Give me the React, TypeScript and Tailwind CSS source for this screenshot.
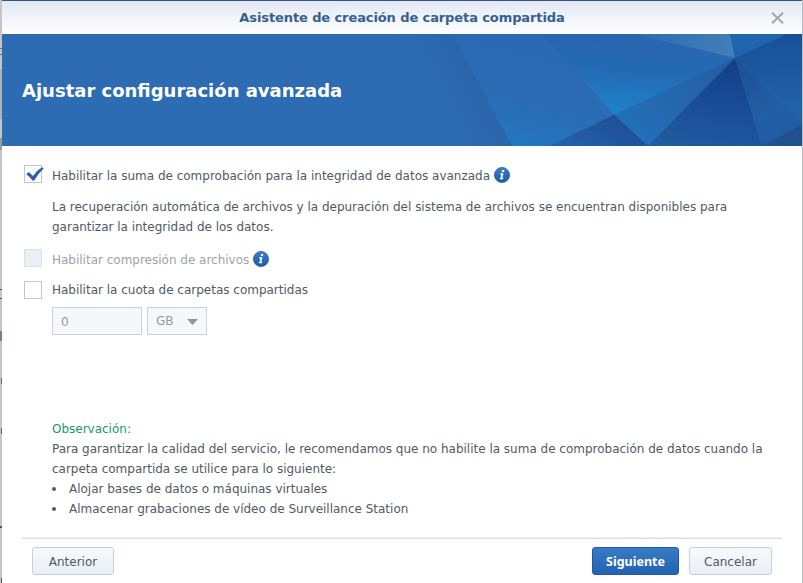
import React from "react";

function InfoIcon() {
  return (
    <svg width="16" height="16" viewBox="0 0 16 16" className="mt-px shrink-0">
      <defs>
        <linearGradient id="info" x1="0" y1="0" x2="0" y2="1">
          <stop offset="0" stopColor="#3b80cb" />
          <stop offset="1" stopColor="#1c58a8" />
        </linearGradient>
      </defs>
      <circle cx="8" cy="8" r="7.6" fill="url(#info)" stroke="#1f559c" strokeWidth=".7" />
      <path d="M8.2 3h2.2l-.5 2H7.7zM6.3 6.2h3.2L8.4 11h1l-.3 1.3H5.7L6 11h.5l.8-3.5H6z" fill="#fff" />
    </svg>
  );
}

function Banner({ children }: { children: React.ReactNode }) {
  return (
    <div className="relative flex h-[112px] w-[800px] shrink-0 items-center bg-[#2d6cb3]">
      <svg className="absolute inset-0" width="800" height="112" viewBox="0 0 800 112">
        <defs>
          <linearGradient id="shade" gradientUnits="userSpaceOnUse" x1="428" y1="72" x2="480" y2="44">
            <stop offset="0" stopColor="#2d6cb3" />
            <stop offset="1" stopColor="#2b65ac" />
          </linearGradient>
          <linearGradient id="left" gradientUnits="userSpaceOnUse" x1="550" y1="0" x2="520" y2="112">
            <stop offset="0" stopColor="#2a69b1" />
            <stop offset=".6" stopColor="#2b6cb4" />
            <stop offset="1" stopColor="#2276be" />
          </linearGradient>
          <linearGradient id="bright" gradientUnits="userSpaceOnUse" x1="620" y1="0" x2="615" y2="80">
            <stop offset="0" stopColor="#2966ae" />
            <stop offset=".45" stopColor="#246ab3" />
            <stop offset="1" stopColor="#1c83cc" />
          </linearGradient>
          <linearGradient id="pale" gradientUnits="userSpaceOnUse" x1="650" y1="0" x2="730" y2="15">
            <stop offset="0" stopColor="#2f70b2" />
            <stop offset="1" stopColor="#427eb7" />
          </linearGradient>
          <linearGradient id="mid" gradientUnits="userSpaceOnUse" x1="725" y1="28" x2="640" y2="112">
            <stop offset="0" stopColor="#245c9f" />
            <stop offset=".55" stopColor="#2567ad" />
            <stop offset="1" stopColor="#2071ba" />
          </linearGradient>
          <linearGradient id="base" gradientUnits="userSpaceOnUse" x1="612" y1="80" x2="590" y2="125">
            <stop offset="0" stopColor="#1e4e97" />
            <stop offset="1" stopColor="#2461ab" />
          </linearGradient>
          <linearGradient id="dark" gradientUnits="userSpaceOnUse" x1="730" y1="30" x2="712" y2="125">
            <stop offset="0" stopColor="#134089" />
            <stop offset=".5" stopColor="#1a4e96" />
            <stop offset="1" stopColor="#235ca1" />
          </linearGradient>
          <linearGradient id="wedge" gradientUnits="userSpaceOnUse" x1="735" y1="30" x2="780" y2="110">
            <stop offset="0" stopColor="#1e4f94" />
            <stop offset=".6" stopColor="#225ea3" />
            <stop offset="1" stopColor="#1f5da2" />
          </linearGradient>
          <linearGradient id="right" gradientUnits="userSpaceOnUse" x1="770" y1="5" x2="780" y2="75">
            <stop offset="0" stopColor="#185197" />
            <stop offset="1" stopColor="#2361a6" />
          </linearGradient>
        </defs>
        <polygon points="380,0 451,0 510,112 380,112" fill="url(#shade)" />
        <polygon points="451,0 540,0 612,80.7 548,112 510,112" fill="url(#left)" />
        <polygon points="540,0 635,0 733,24 612,80.7" fill="url(#bright)" />
        <polygon points="633,0 728,0 733,24" fill="url(#pale)" />
        <polygon points="728,0 785,0 733,24" fill="#1e65ae" />
        <polygon points="785,0 800,0 800,88 733,24" fill="url(#right)" />
        <polygon points="733,24 612,80.7 646,112" fill="url(#mid)" />
        <polygon points="612,80.7 548,112 646,112" fill="url(#base)" />
        <polygon points="733,24 646,112 760,112" fill="url(#dark)" />
        <polygon points="733,24 800,88 800,90 760,112" fill="url(#wedge)" />
        <polygon points="800,90 800,112 760,112" fill="#1f528f" />
      </svg>
      {children}
    </div>
  );
}

function Box({ checked, disabled }: { checked?: boolean; disabled?: boolean }) {
  return (
    <span
      className={
        "mr-[10px] block h-[18px] w-[18px] shrink-0 border " +
        (disabled ? "border-[#d9e2ea] bg-[#ebf0f5]" : "border-[#bdc8d0] bg-white")
      }
    >
      {checked && (
        <svg width="20" height="18" viewBox="0 0 20 18" className="-mt-px max-w-none overflow-visible">
          <path d="M1.2 9.2 3.8 7 8 11Q12 5 17 2.2L18.8 3.2Q13 8.5 9.3 15.6H7.4Q5 11.5 1.2 9.2Z" fill="#2c609f" />
        </svg>
      )}
    </span>
  );
}

const grayButton =
  "flex h-[28px] items-center justify-center rounded-[3px] border border-[#c5d0da] bg-linear-to-b from-[#f7fafd] to-[#e9eff5] pt-px text-[#505a64]";

export default function App() {
  return (
    <div className="flex h-[583px] w-[803px] overflow-hidden bg-[#bfc0c2] font-['DejaVu_Sans',Verdana,sans-serif] text-[12px] leading-[20px] text-[#505a64]">
      <div className="flex w-[2px] shrink-0 flex-col bg-[#c5c5c5]">
        <div className="mt-[48px] h-px bg-[#647b8e]" />
        <div className="mt-[5px] h-px bg-[#647b8e]" />
        <div className="mt-[14px] h-[50px] bg-[#a9b5bf]" />
        <div className="mt-[19px] h-[12px] bg-[#9b9b9b]" />
        <div className="mt-[139px] h-px bg-[#555]" />
        <div className="mt-[8px] h-px bg-[#555]" />
        <div className="mt-[32px] h-[10px] bg-[#6189a8]" />
        <div className="mt-[37px] ml-px h-[6px] bg-[#666]" />
        <div className="mt-[44px] ml-px h-[6px] bg-[#666]" />
        <div className="mt-[92px] h-[2px] bg-[#555]" />
        <div className="mt-[50px] ml-px h-[5px] bg-[#555]" />
      </div>
      <div className="flex w-[800px] shrink-0 flex-col bg-white">
        <header className="flex h-[34px] shrink-0 items-center border-t border-[#34558b] bg-linear-to-b from-[#e2e8f3] to-white">
          <span className="w-[31px]" />
          <h1 className="flex-1 text-center text-[13px] font-bold tracking-[-0.1px] whitespace-nowrap text-[#35608f]">
            Asistente de creación de carpeta compartida
          </h1>
          <svg className="mr-[18px]" width="13" height="12" viewBox="0 0 13 12">
            <path d="M1 .8 12 11.2M12 .8 1 11.2" stroke="#a2a5aa" strokeWidth="2" />
          </svg>
        </header>
        <Banner>
          <h2 className="relative mt-[2px] ml-[20px] text-[18px] font-bold whitespace-nowrap text-white">
            Ajustar configuración avanzada
          </h2>
        </Banner>
        <main className="flex h-[392px] shrink-0 flex-col pt-[18px] pl-[22px] tracking-[-0.008px] whitespace-nowrap">
          <div className="flex h-[20px] items-center">
            <Box checked />
            <span className="mt-[3px] mr-[4px]">Habilitar la suma de comprobación para la integridad de datos avanzada</span>
            <InfoIcon />
          </div>
          <p className="mt-[13px] ml-[28px]">
            La recuperación automática de archivos y la depuración del sistema de archivos se encuentran disponibles para
            <br />
            garantizar la integridad de los datos.
          </p>
          <div className="mt-[11px] flex h-[20px] items-center">
            <Box disabled />
            <span className="mt-[3px] mr-[4px] text-[#9ba3ab]">Habilitar compresión de archivos</span>
            <InfoIcon />
          </div>
          <div className="mt-[12px] flex h-[20px] items-center">
            <Box />
            <span>Habilitar la cuota de carpetas compartidas</span>
          </div>
          <div className="mt-[7px] ml-[28px] flex gap-[5px] text-[#949ba2]">
            <div className="flex h-[28px] w-[90px] items-center border border-[#c8d2da] bg-[#f5f7fa] pt-px pl-[8px]">0</div>
            <div className="flex h-[28px] w-[60px] items-center justify-between border border-[#c8d2da] bg-[#f5f7fa] pr-[8px] pl-[8px]">
              <span>GB</span>
              <svg width="11" height="6" viewBox="0 0 11 6" className="mt-px">
                <path d="M0 0H11L5.5 6Z" fill="#8c98a2" />
              </svg>
            </div>
          </div>
          <div className="mt-[84px] ml-[28px]">
            <p className="text-[#179a6c]">Observación:</p>
            <p>
              Para garantizar la calidad del servicio, le recomendamos que no habilite la suma de comprobación de datos cuando la
              <br />
              carpeta compartida se utilice para lo siguiente:
            </p>
            <ul>
              {["Alojar bases de datos o máquinas virtuales", "Almacenar grabaciones de vídeo de Surveillance Station"].map((t) => (
                <li key={t} className="flex items-center">
                  <span className="mr-[13px] h-[4px] w-[4px] rounded-full bg-[#505a64]" />
                  <span>{t}</span>
                </li>
              ))}
            </ul>
          </div>
        </main>
        <footer className="mx-[20px] flex h-[45px] shrink-0 border-t border-[#dcdfe1] px-[10px] pt-[8px] shadow-[0_-1px_1px_#f0f1f2]">
          <button className={grayButton + " w-[82px]"}>
            <span>Anterior</span>
          </button>
          <button className="ml-auto flex h-[28px] w-[87px] items-center justify-center rounded-[3px] border border-[#205a9e] bg-linear-to-b from-[#397ac6] to-[#2262b1] pt-px font-['Noto_Sans',Tahoma,sans-serif] text-[12.5px] font-bold text-white">
            <span>Siguiente</span>
          </button>
          <button className={grayButton + " ml-[10px] w-[83px]"}>
            <span>Cancelar</span>
          </button>
        </footer>
      </div>
      <div className="w-px bg-[#b9bcc2]" />
    </div>
  );
}
